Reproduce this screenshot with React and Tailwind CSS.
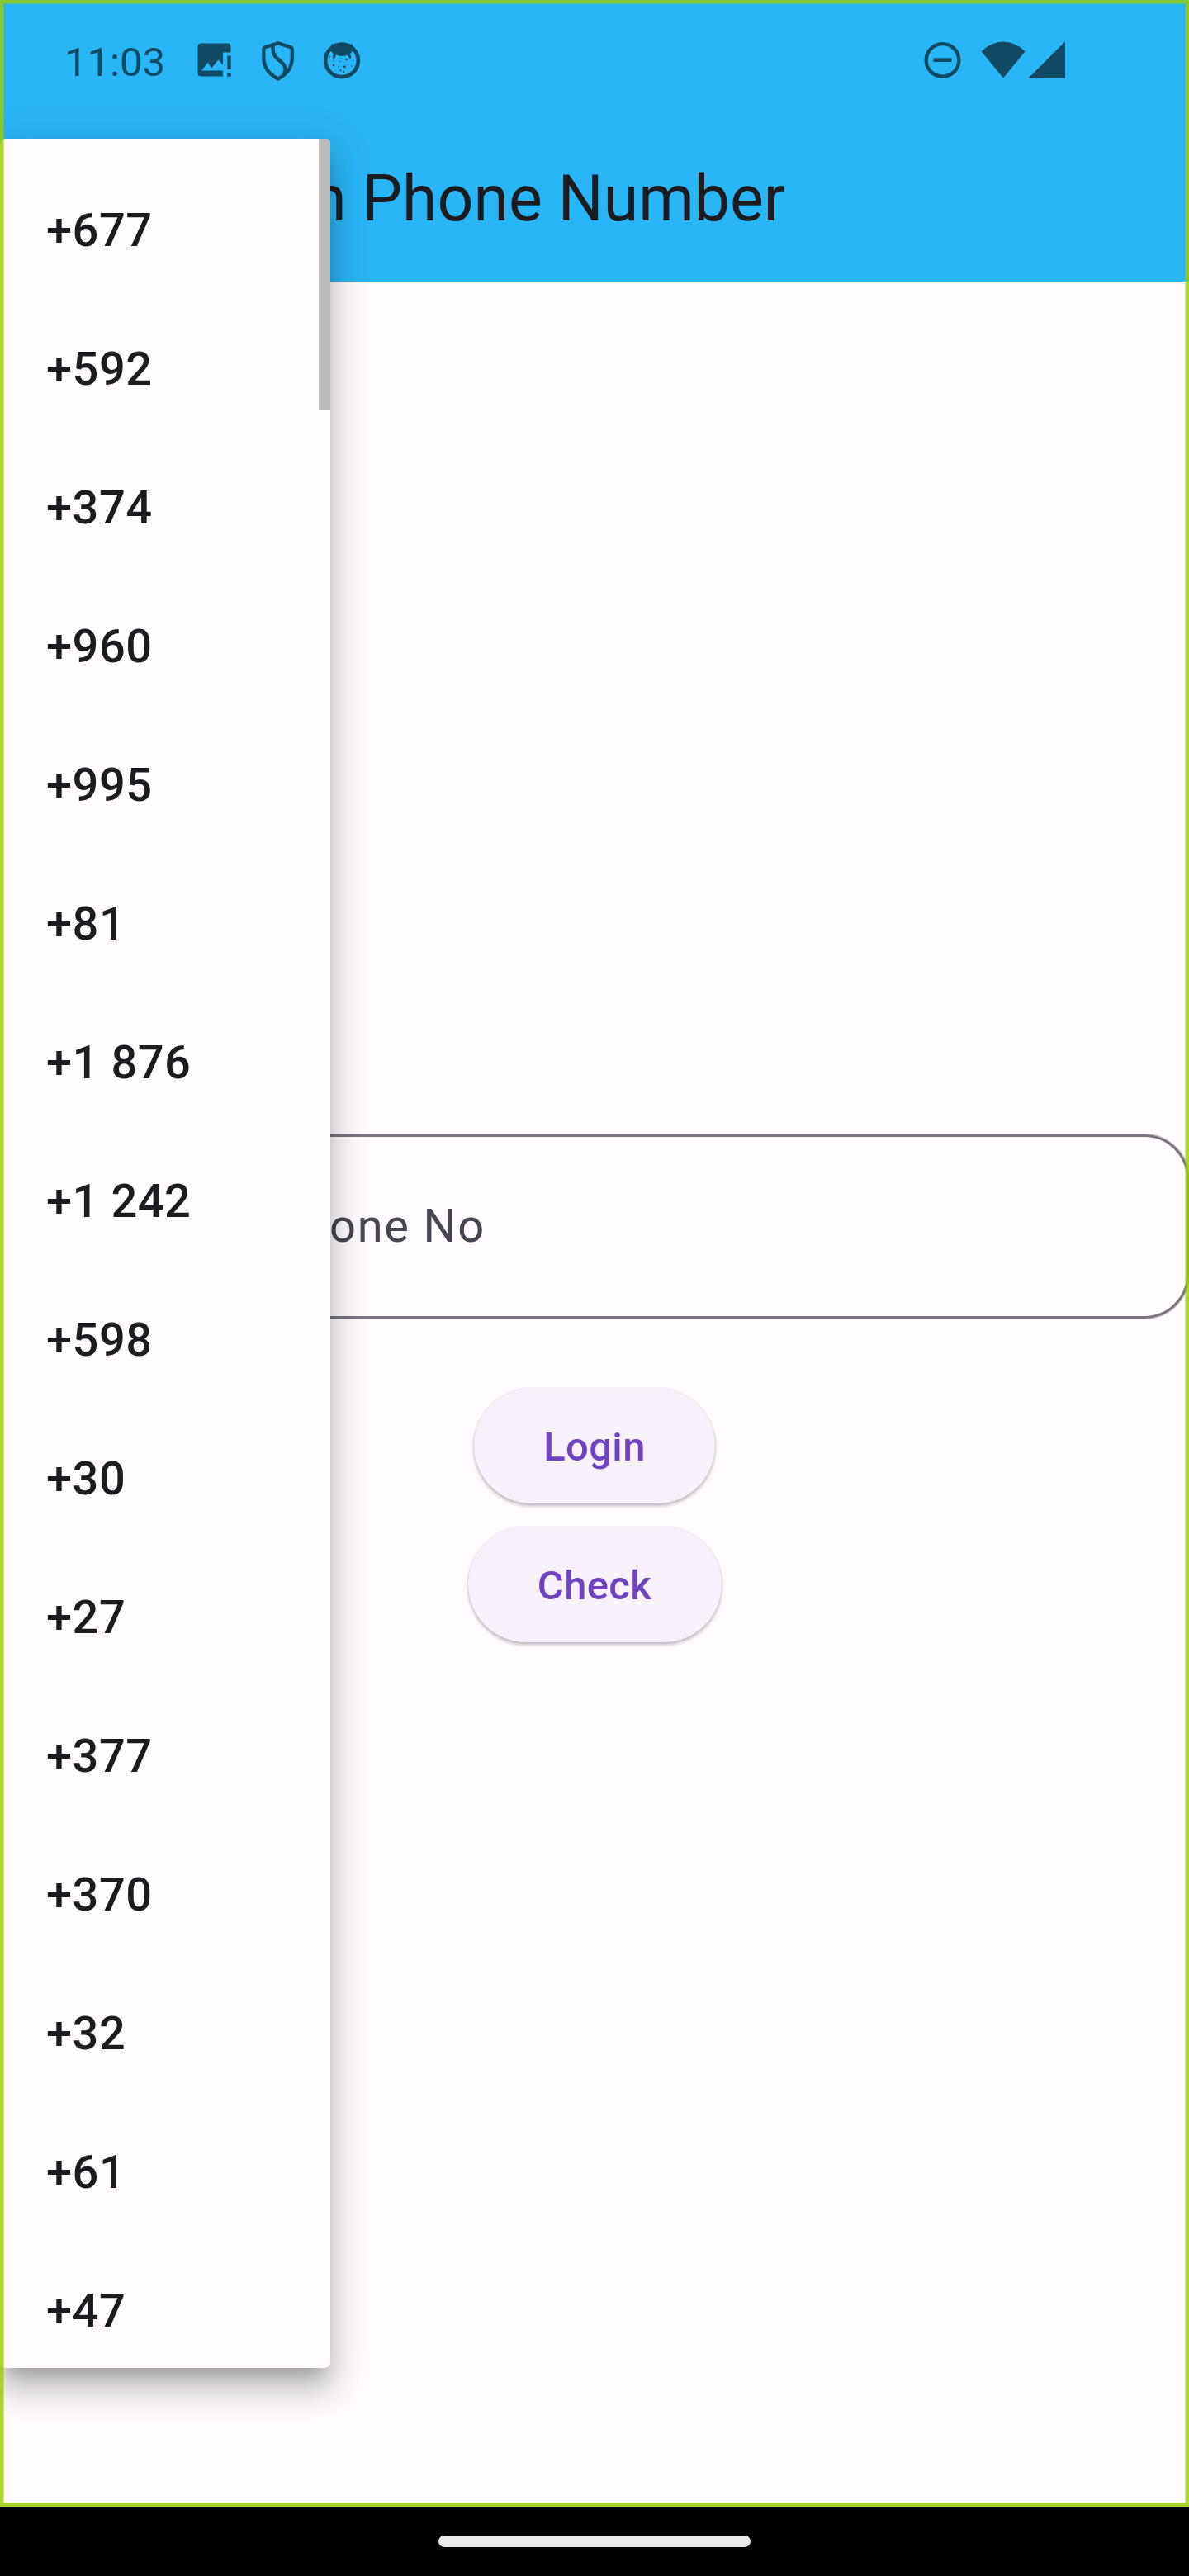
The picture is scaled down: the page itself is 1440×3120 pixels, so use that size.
import React from "react";

const CODES = [
  "+677", "+592", "+374", "+960", "+995", "+81", "+1 876", "+1 242",
  "+598", "+30", "+27", "+377", "+370", "+32", "+61", "+47",
];

function ImageAlertIcon() {
  return (
    <svg className="h-[48px] w-[48px]" viewBox="236 50 48 48" fill="currentColor">
      <path
        fillRule="evenodd"
        d="M243.500 53.500h32a4 4 0 0 1 4 4V64.500H270V80l-5.500-6.500-8 9.500-5-6-7.500 9.500H270V93.500H243.500a4 4 0 0 1-4-4V57.500a4 4 0 0 1 4-4Z"
      />
      <path d="M275.300 68.500h4.400V85h-4.400zM275.300 89.300h4.400v4.400h-4.400z" />
    </svg>
  );
}

function ShieldIcon() {
  return (
    <svg className="h-[50px] w-[48px]" viewBox="313 49 48 50" fill="none" stroke="currentColor" strokeWidth="4.300" strokeLinejoin="round">
      <path d="M336.800 52.300 352 57.200Q353.800 58 353.800 60V70C353.800 82 346.500 90.500 336.800 95.500 327 90.500 319.300 82 319.300 70V60Q319.300 58 321 57.200Z" />
      <path d="M330.500 54.500V60C330.500 73 346 73 345.500 85L343.500 90.500" />
    </svg>
  );
}

function CatIcon() {
  const specks = [
    [399, 69, 0.6], [404, 73.500, 0.7], [403.500, 79, 1.3], [409.500, 80.500, 0.7], [411, 74.500, 0.8],
    [419, 72, 1.2], [416.800, 81, 1.4], [420.500, 78.500, 0.6], [427, 73.500, 0.6], [425, 80, 0.7],
    [412, 85, 0.9], [405.500, 85, 0.6], [416, 87, 0.9], [413, 71, 0.5],
  ];
  return (
    <svg className="h-[48px] w-[48px]" viewBox="389.500 49 48 48" fill="currentColor">
      <circle cx="413.500" cy="73.300" r="19.800" fill="none" stroke="currentColor" strokeWidth="4.700" />
      <path d="M398 63.500 401 53.500H426L429 63.500 426.800 61.800 423.400 65.300 424.800 68.500 424 71 422 70 420.200 66.400Q413.500 69.500 406.800 66.400L405 70 403 71 402.200 68.500 403.600 65.300 400.200 61.800Z" />
      {specks.map(([x, y, r]) => (
        <circle key={`${x}-${y}`} cx={x} cy={y} r={r} />
      ))}
    </svg>
  );
}

function StatusBar() {
  return (
    <div className="flex h-[145px] items-start justify-between text-[#104a62]">
      <div className="flex pl-[78px] pt-[49px]">
        <span className="w-[158px] whitespace-nowrap text-[49px] leading-[53px]">11:03</span>
        <ImageAlertIcon />
        <div className="ml-[29px] flex"><ShieldIcon /></div>
        <div className="ml-[28.500px] flex"><CatIcon /></div>
      </div>
      <div className="flex pr-[150px] pt-[49px]">
        <svg className="mr-[24px] h-[48px] w-[45px]" viewBox="1118.500 49 45 48">
          <circle cx="1141" cy="72.900" r="19.800" fill="none" stroke="currentColor" strokeWidth="4.400" />
          <path d="M1130 70.300h22v4.700h-22z" fill="currentColor" />
        </svg>
        <svg className="h-[48px] w-[54px]" viewBox="1187.500 49 54 48" fill="currentColor">
          <path d="M1188 62.200Q1200 50.500 1214.500 50.500T1241 62.200L1214.500 94.500Z" />
        </svg>
        <svg className="ml-[3.500px] h-[48px] w-[45px]" viewBox="1245 49 45 48" fill="currentColor">
          <path d="M1245.500 94.700 1290 50.300V94.700Z" />
        </svg>
      </div>
    </div>
  );
}

function CountryCodeMenu() {
  return (
    <div className="absolute left-0 top-[168px] h-[2700px] w-[399.500px] rounded-[7px] bg-[#fffbff] shadow-[0_17.5px_17.5px_-10.5px_rgba(0,0,0,0.2),0_28px_35px_3.5px_rgba(0,0,0,0.14),0_10.5px_49px_7px_rgba(0,0,0,0.12)]">
      <ul className="h-full overflow-hidden rounded-[7px] pt-[27px]">
        {CODES.map((code) => (
          <li key={code} className="flex h-[168px] items-center pl-[56px] text-[56px] font-medium leading-[66px] tracking-[0.525px] text-[#1c1b1f]">
            {code}
          </li>
        ))}
      </ul>
      <div className="absolute right-0 top-0 h-[328px] w-[14px] rounded-tr-[5px] bg-[#bcbcbc]" />
    </div>
  );
}

const BUTTON =
  "flex h-[140px] items-center justify-center rounded-full bg-[#f6f1fb] pt-[3px] text-[49px] font-medium tracking-[0.35px] text-[#6f43c0] shadow-[0_3px_4px_rgba(0,0,0,0.26),0_0_2px_rgba(0,0,0,0.1)]";

export default function App() {
  return (
    <div className="flex h-[3120px] w-[1440px] flex-col overflow-hidden bg-black font-['Roboto',sans-serif]">
      <div className="relative flex h-[3036px] flex-col overflow-hidden bg-[#fffbff]">
        <header className="h-[341px] shrink-0 bg-[#29b6f6]">
          <StatusBar />
          <h1 className="flex h-[196px] items-center whitespace-pre pb-[2px] pl-[377px] text-[77px] font-normal text-[#1c1b1f]">
            h Phone Number
          </h1>
        </header>
        <main className="flex flex-col items-center pt-[1033px]">
          <div className="ml-[289px] flex h-[223px] w-[1151px] items-center rounded-[54px] border-[3px] border-[#79747e] pb-[2px] pl-[107px] text-[56px] tracking-[1.75px] text-[#49454f] shadow-[0_0_0_1px_rgba(121,116,126,0.5)]">
            one No
          </div>
          <button className={`${BUTTON} mt-[84px] w-[292px]`}>Login</button>
          <button className={`${BUTTON} mt-[28px] w-[307px]`}>Check</button>
        </main>
        <CountryCodeMenu />
        <div className="pointer-events-none absolute inset-0 border-4 border-[#99cc00]/82 shadow-[inset_0_0_0_1px_rgba(153,204,0,0.42)]" />
      </div>
      <nav className="flex h-[84px] items-center justify-center">
        <div className="h-[14px] w-[378px] rounded-full bg-[#ebebeb]" />
      </nav>
    </div>
  );
}
